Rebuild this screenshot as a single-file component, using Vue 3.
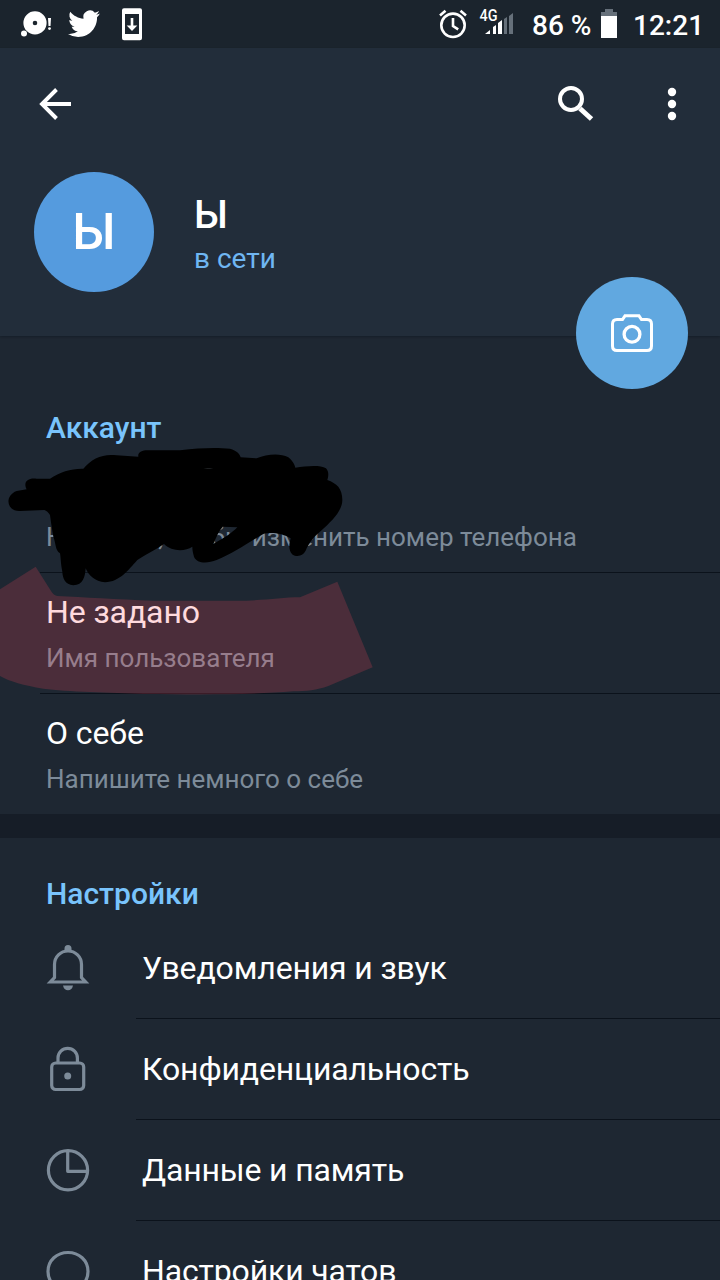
<script setup>
const fields = [
  { title: '', note: 'Нажмите, чтобы изменить номер телефона', kind: 'phone' },
  { title: 'Не задано', note: 'Имя пользователя', kind: 'username' },
  { title: 'О себе', note: 'Напишите немного о себе', kind: 'about' },
]
const settings = [
  { icon: 'bell', label: 'Уведомления и звук' },
  { icon: 'lock', label: 'Конфиденциальность' },
  { icon: 'data', label: 'Данные и память' },
  { icon: 'chat', label: 'Настройки чатов' },
]
</script>

<template>
  <div class="screen">
    <div class="status">
      <svg class="notices" width="150" height="48" viewBox="0 0 150 48">
        <g fill="#fff">
          <path fill-rule="evenodd" d="M35 11.3a11.6 11.6 0 1 1 0 23.2a11.6 11.6 0 0 1 0-23.2zM35 20.7a2.3 2.3 0 1 0 0 4.6a2.3 2.3 0 0 0 0-4.6z" />
          <circle cx="24" cy="33.5" r="3" />
          <path d="M48 18h3l-.5 8h-2z" /><circle cx="49.5" cy="28.6" r="1.4" />
          <path transform="translate(68 7) scale(1.35)" d="M23.6 4.9c-.9.4-1.8.7-2.8.8 1-.6 1.8-1.600 2.200-2.700-1 .6-2 1-3.100 1.200a4.900 4.900 0 0 0-8.400 4.500C7.700 8.500 4.100 6.600 1.700 3.600a4.900 4.900 0 0 0 1.500 6.600c-.8 0-1.600-.2-2.200-.6 0 2.300 1.600 4.400 3.900 4.900-.7.2-1.500.2-2.200.1.600 2 2.400 3.400 4.600 3.400A9.900 9.900 0 0 1 0 20a14 14 0 0 0 7.500 2.200c9.100 0 14.300-7.700 14-14.600.9-.7 1.600-1.600 2.100-2.700z" />
          <path fill-rule="evenodd" d="M124 8.300h16a2 2 0 0 1 2 2v28a2 2 0 0 1-2 2h-16a2 2 0 0 1-2-2v-28a2 2 0 0 1 2-2zM125 14v20h14V14z" />
          <path d="M130.700 18h2.600v7.500h4L132 31l-5.300-5.500h4z" />
        </g>
      </svg>
      <div class="indicators">
        <svg width="76" height="48" viewBox="438 0 76 48">
          <g fill="none" stroke="#fff" stroke-width="2.600">
            <circle cx="453" cy="25.300" r="11.700" />
            <path d="M453 18v8l5.200 3.400M440 15.500l5.500-4.700M466 15.500l-5.500-4.700" />
          </g>
          <path fill="#fff" d="M485 34l5-4v4zM493 27l3-2v9h-3zM498 23l4-3v14h-4z" />
          <path fill="#66707a" d="M504 19l3-2v17h-3zM509 16l4-3v21h-4z" />
          <text class="net" x="479.500" y="20.500" textLength="18" lengthAdjust="spacingAndGlyphs">4G</text>
        </svg>
        <span class="percent">86 %</span>
        <svg width="16" height="48" viewBox="0 0 16 48"><path fill="#66707a" d="M4 9h8v3h4v4H0v-4h4z" /><path fill="#fff" d="M0 16h16v22H0z" /></svg>
        <span class="clock">12:21</span>
      </div>
    </div>

    <header class="header">
      <div class="toolbar">
        <svg width="40" height="40" viewBox="35 84 40 40"><path fill="none" stroke="#fff" stroke-width="3.900" d="M71 104H42M56.500 89.500L42 104l14.500 14.500" /></svg>
        <div class="actions">
          <svg width="44" height="44" viewBox="554 82 44 44" fill="none" stroke="#fff"><circle cx="571" cy="99" r="11" stroke-width="4" /><path stroke-width="5" d="M580 108.500l11.500 10.500" /></svg>
          <svg width="10" height="36" viewBox="0 0 10 36" fill="#fff"><circle cx="5" cy="6" r="4.200" /><circle cx="5" cy="18" r="4.200" /><circle cx="5" cy="30" r="4.200" /></svg>
        </div>
      </div>
      <div class="profile">
        <div class="avatar">Ы</div>
        <div class="identity">
          <div class="name">Ы</div>
          <div class="online">в сети</div>
        </div>
      </div>
      <div class="camera">
        <svg width="44" height="40" viewBox="610 313 44 40" fill="none" stroke="#fff" stroke-width="3">
          <path d="M617 319.500h5.500l2.500-3.700h14l2.500 3.700h5.500q4.500 0 4.500 4.500v22q0 4.500-4.500 4.500h-30q-4.500 0-4.500-4.500v-22q0-4.500 4.500-4.500z" />
          <circle cx="632" cy="334.300" r="7.900" stroke-width="3.300" />
        </svg>
      </div>
    </header>

    <section class="account">
      <h2 class="tall">Аккаунт</h2>
      <div v-for="f in fields" :key="f.kind" class="field" :class="f.kind">
        <div class="title">{{ f.title }}</div>
        <div class="note"><span>{{ f.note }}</span></div>
      </div>
      <svg class="scribble" width="360" height="200" viewBox="0 0 1080 600">
        <path fill-rule="evenodd" d="M50 273L80 268C68 245 85 232 110 236L150 236C180 215 215 205 250 206C275 175 310 160 350 166L415 170C412 155 430 150 445 151L540 151C600 143 650 142 690 146C710 152 720 162 722 172L770 175C800 162 840 158 865 172C880 185 884 195 886 203C920 198 960 194 978 205C988 215 985 230 982 240C1010 250 1027 265 1027 300C1027 330 1000 360 960 395C935 415 928 430 920 445C912 470 890 472 878 464C866 455 866 435 872 415C850 400 810 395 790 402C740 430 700 460 650 480C620 492 590 490 582 470C578 455 577 448 577 440C555 455 515 455 492 432C465 450 440 462 412 480C385 510 360 545 315 547C285 545 265 525 257 505C255 530 250 556 220 556C195 553 188 535 187 515C182 490 182 470 180 460C165 450 168 430 160 410C155 380 152 360 150 345C145 338 140 332 133 330L60 333C20 335 12 287 50 273ZM640 432C650 410 655 395 668 380L712 382C695 400 670 415 640 432Z" />
        <path fill="#34383c" d="M610 205Q625 203 640 206Q625 207 610 205Z" />
      </svg>
      <svg class="highlight" width="400" height="150" viewBox="0 0 1200 450">
        <path fill="#ff465a" fill-opacity=".2" d="M0 88L107 20L155 96Q162 107 172 108C250 112 350 118 460 122L740 122C800 120 850 112 900 112L1012 65L1118 322L985 378C950 390 920 394 880 394C750 405 600 404 430 402C330 398 200 395 130 386C70 376 30 365 0 348Z" />
      </svg>
    </section>

    <div class="band"></div>

    <section>
      <h2>Настройки</h2>
      <div v-for="s in settings" :key="s.icon" class="row">
        <div class="icon">
          <svg width="48" height="52" viewBox="0 0 48 52" fill="none" stroke="#7d8b99" stroke-width="3.200">
            <template v-if="s.icon === 'bell'">
              <path d="M10.500 35.500V22.500a13.500 13.500 0 0 1 27 0V35.500l4.200 4.500H6.300z" />
              <path fill="#7d8b99" stroke="none" d="M20.500 9V6.500a3.500 3.500 0 0 1 7 0V9zM19 43.500h10q-1 4.700-5 4.700T19 43.500z" />
            </template>
            <template v-else-if="s.icon === 'lock'">
              <rect x="7.700" y="20" width="32" height="26.500" rx="4" />
              <path d="M14 20V15a9.700 9.700 0 0 1 19.400 0V20" />
              <circle cx="23.700" cy="33" r="3.500" fill="#7d8b99" stroke="none" />
            </template>
            <template v-else-if="s.icon === 'data'">
              <circle cx="24" cy="26.300" r="19.600" /><path stroke-linejoin="round" d="M23.700 7v20.300h20" />
            </template>
            <path v-else d="M24 7.500c11 0 20 7.800 20 19s-9 19-20 19-20-7.800-20-19 9-19 20-19z" />
          </svg>
        </div>
        <div class="label">{{ s.label }}</div>
      </div>
    </section>
  </div>
</template>

<style>
body { background: #1e2732; }
</style>

<style scoped>
.screen { width: 720px; height: 1280px; overflow: hidden; background: #1e2732; color: #fff; font-family: Roboto, "Noto Sans", sans-serif; }
svg { display: block; flex: none; }
.status { height: 48px; background: #1b242d; display: flex; justify-content: space-between; }
.indicators { display: flex; padding-right: 17px; font-size: 28px; font-weight: 500; line-height: 51px; white-space: nowrap; }
.net { font: 500 17px Roboto, sans-serif; fill: #fff; }
.percent { width: 69px; margin-left: 18px; }
.clock { width: 70px; margin-left: 16px; }
.header { position: relative; height: 288px; background: #222d3a; box-shadow: 0 1px 2px rgba(10, 18, 28, .4); z-index: 1; }
.toolbar { height: 112px; padding: 0 43px 0 35px; display: flex; align-items: center; justify-content: space-between; }
.actions { display: flex; align-items: center; gap: 69px; }
.profile { padding: 12px 0 0 34px; display: flex; gap: 40px; }
.avatar { width: 120px; height: 120px; border-radius: 50%; background: #559bde; font-size: 50px; font-weight: 500; line-height: 121px; text-align: center; }
.identity { padding-top: 21px; }
.name { font-size: 39px; font-weight: 500; line-height: 44px; }
.online { font-size: 28px; line-height: 44px; color: #6fb6f2; }
.camera { position: absolute; right: 32px; top: 229px; width: 112px; height: 112px; border-radius: 50%; background: #61a8e0; display: flex; align-items: center; justify-content: center; }
.account { position: relative; }
h2 { margin: 0; height: 80px; padding: 37px 0 0 46px; box-sizing: border-box; font-size: 30px; font-weight: 500; line-height: 38px; color: #79c4fc; }
h2.tall { height: 116px; padding-top: 73px; }
.field { position: relative; height: 121px; box-sizing: border-box; padding: 20px 0 0 46px; }
.field.about { height: 120px; }
.field:not(.about)::after, .row::after { content: ""; position: absolute; left: 40px; right: 0; bottom: 0; height: 1px; background: #0b121b; }
.title { height: 38px; font-size: 32px; line-height: 38px; letter-spacing: -.1px; }
.note { margin-top: 12px; font-size: 26px; line-height: 30px; color: #7d8b99; }
.scribble { position: absolute; left: 0; top: 64px; }
.highlight { position: absolute; left: 0; top: 224px; }
.band { height: 24px; background: #161d27; }
.row { position: relative; height: 101px; padding-bottom: 2px; box-sizing: border-box; display: flex; align-items: center; }
.row::after { left: 136px; }
.icon { width: 142px; padding-left: 44px; box-sizing: border-box; }
.label { font-size: 32px; line-height: 38px; letter-spacing: -.15px; }
</style>
